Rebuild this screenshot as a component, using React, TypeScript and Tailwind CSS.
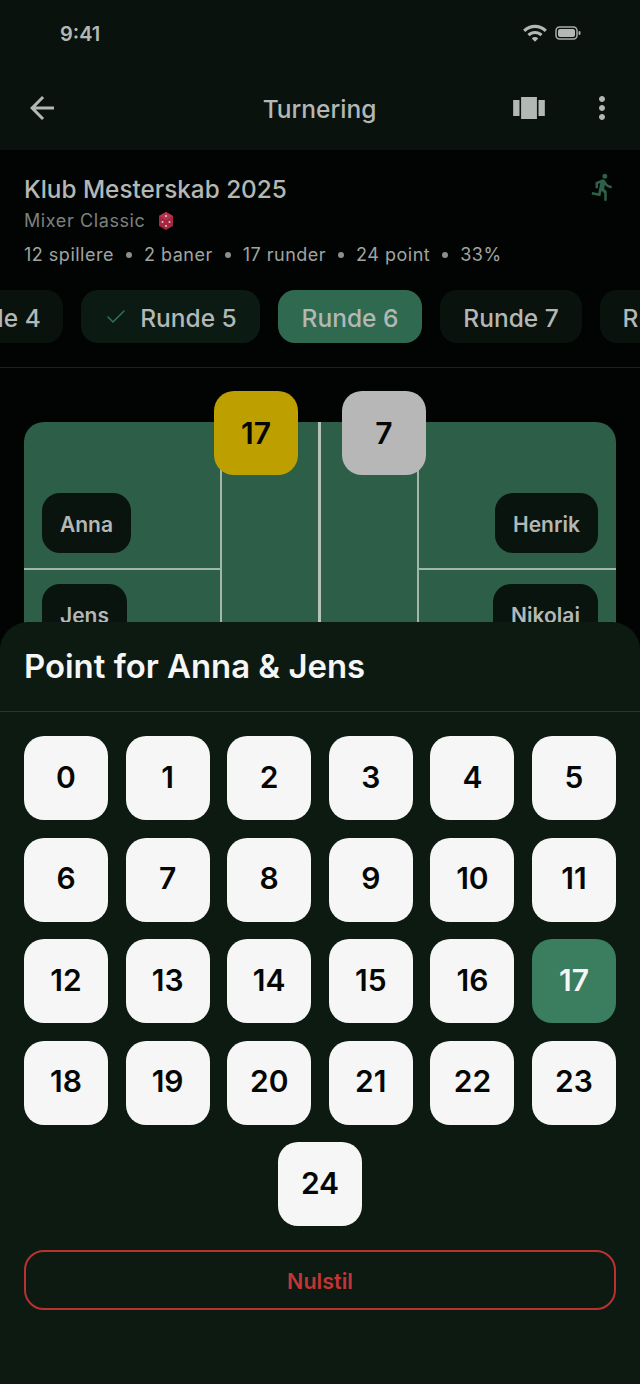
import { Check } from 'lucide-react';
import { MdArrowBack, MdDirectionsRun, MdMoreVert, MdViewCarousel, MdWifi } from 'react-icons/md';

const points = Array.from({ length: 25 }, (_, i) => i);
const rounds = [
  { label: 'Runde 4', width: 'w-[142px]' },
  { label: 'Runde 5', width: 'w-[179px]', done: true },
  { label: 'Runde 6', width: 'w-[144px]', active: true },
  { label: 'Runde 7', width: 'w-[142px]' },
  { label: 'Runde 8', width: 'w-[142px]' },
];
const stats = ['12 spillere', '2 baner', '17 runder', '24 point', '33%'];

function PlayerChip({ name, width }: { name: string; width: string }) {
  return (
    <div className={`h-[60px] ${width} shrink-0 rounded-[18px] bg-[#0a140f] flex items-center justify-center pt-[4px] text-[21px] font-semibold text-[#b4b8b5]`}>
      {name}
    </div>
  );
}

export default function App() {
  return (
    <div className="relative h-[1384px] w-[640px] overflow-hidden bg-[#020403] font-['Inter',sans-serif]">
      <header className="h-[150px] bg-[#09120d]">
        <div className="h-[66px] pl-[60px] pr-[59px] flex items-center justify-between">
          <span className="pt-[2px] text-[20px] font-semibold text-[#b4b8b5]">9:41</span>
          <div className="flex items-center gap-[7px] text-[#b4b8b5]">
            <MdWifi size={26} />
            <svg width="26" height="16" viewBox="0 0 26 16" fill="none">
              <rect x="1" y="2" width="21" height="12" rx="3.5" stroke="#a9adaa" strokeWidth="1.5" />
              <rect x="3" y="4" width="17" height="8" rx="2" fill="#b4b8b5" />
              <rect x="23.5" y="6" width="2" height="4" rx="1" fill="#a9adaa" />
            </svg>
          </div>
        </div>
        <div className="h-[84px] pl-[24px] pr-[20px] flex items-center text-[#b4b8b5]">
          <MdArrowBack size={36} />
          <h1 className="flex-1 text-center text-[24.5px] font-medium pl-[69px] pt-[2px]">Turnering</h1>
          <MdViewCarousel size={38} className="mr-[36px]" />
          <MdMoreVert size={36} />
        </div>
      </header>

      <section className="px-[24px] pt-[23px] h-[128px]">
        <div className="flex justify-between">
          <div className="min-w-0">
            <h2 className="text-[24.3px] leading-[32px] font-medium text-[#b4b8b5]">Klub Mesterskab 2025</h2>
            <div className="mt-[3px] flex items-center gap-[13px] text-[18px] leading-[26px] tracking-[0.6px] text-[#7d817e]">
              Mixer Classic
              <svg width="16" height="20" viewBox="0 0 16 20">
                <path d="M8 1 15 5v10l-7 4-7-4V5z" fill="#a3283f" />
                <path d="M8 1 15 5 8 9 1 5z" fill="#b5354c" />
                <circle cx="8" cy="5" r="1" fill="#e8c9cf" />
                <circle cx="4.5" cy="11" r="1" fill="#e8c9cf" />
                <circle cx="11.5" cy="11" r="1" fill="#e8c9cf" />
                <circle cx="8" cy="15" r="1" fill="#e8c9cf" />
              </svg>
            </div>
          </div>
          <MdDirectionsRun size={30} className="text-[#2c6249] -mr-[2px] mt-[-1px]" />
        </div>
        <div className="mt-[8px] flex items-center gap-[12px] text-[18px] leading-[26px] tracking-[0.5px] text-[#a0a4a1]">
          {stats.map((stat, i) => (
            <div key={stat} className="flex items-center gap-[12px]">
              {i > 0 && <span className="h-[6px] w-[6px] rounded-full bg-[#8b8f8c]" />}
              <span>{stat}</span>
            </div>
          ))}
        </div>
      </section>

      <nav className="flex gap-[18px] -ml-[79px] pt-[12px] h-[90px] border-b border-[#1d2220] w-[800px]">
        {rounds.map((round) => (
          <div
            key={round.label}
            className={`h-[53px] ${round.width} shrink-0 rounded-[17px] flex items-center justify-center gap-[12px] pt-[3px] text-[24.5px] font-medium text-[#b4b8b5] ${
              round.active ? 'bg-[#2f6a50]' : round.done ? 'bg-[#0b1a13]' : 'bg-[#0a120e]'
            }`}
          >
            {round.done && <Check size={24} strokeWidth={1.5} className="-mt-[3px] text-[#2f7355]" />}
            {round.label}
          </div>
        ))}
      </nav>

      <main className="px-[24px] pt-[54px]">
        <div className="relative flex h-[294px] overflow-hidden rounded-t-[20px] bg-[#2d5f48]">
          <div className="w-[198px] border-r-2 border-[#a4b5ab]">
            <div className="h-[148px] border-b-2 border-[#a4b5ab] pl-[18px] pt-[71px]">
              <PlayerChip name="Anna" width="w-[89px]" />
            </div>
            <div className="pl-[18px] pt-[14px]">
              <PlayerChip name="Jens" width="w-[85px]" />
            </div>
          </div>
          <div className="w-[99px] border-r-[3px] border-[#b6c2ba]" />
          <div className="w-[98px] border-r-2 border-[#a4b5ab]" />
          <div className="flex-1">
            <div className="h-[148px] border-b-2 border-[#a4b5ab] pr-[18px] pt-[71px] flex justify-end">
              <PlayerChip name="Henrik" width="w-[103px]" />
            </div>
            <div className="pr-[18px] pt-[14px] flex justify-end">
              <PlayerChip name="Nikolai" width="w-[105px]" />
            </div>
          </div>
        </div>
      </main>

      {/* score badges sit over the top edge of the court */}
      <div className="absolute left-[214px] top-[391px] h-[84px] w-[84px] rounded-[20px] bg-[#bd9f00] flex items-center justify-center text-[30px] font-semibold text-[#050705]">
        17
      </div>
      <div className="absolute left-[342px] top-[391px] h-[84px] w-[84px] rounded-[20px] bg-[#b7b7b7] flex items-center justify-center text-[30px] font-semibold text-[#050705]">
        7
      </div>

      <div className="absolute inset-x-0 bottom-0 h-[762px] rounded-t-[28px] bg-[#0c1a12]">
        <div className="h-[90px] border-b border-[#2a3630] px-[24px] pt-[23px]">
          <h3 className="text-[32.9px] leading-[42px] font-semibold text-[#f5f6f5]">Point for Anna &amp; Jens</h3>
        </div>
        <div className="px-[24px] pt-[24px] flex flex-wrap justify-center gap-[17.6px]">
          {points.map((point) => (
            <div
              key={point}
              className={`h-[84px] w-[84px] rounded-[20px] flex items-center justify-center pb-[2px] text-[30px] font-semibold ${
                point === 17 ? 'bg-[#3a7d5f] text-[#f5f6f5]' : 'bg-[#f5f6f5] text-[#050705]'
              }`}
            >
              {point}
            </div>
          ))}
        </div>
        <div className="mx-[24px] mt-[24px] h-[60px] rounded-[20px] border-2 border-[#b93232] flex items-center justify-center pt-[2px] text-[21.5px] font-semibold text-[#c43434]">
          Nulstil
        </div>
      </div>
    </div>
  );
}
